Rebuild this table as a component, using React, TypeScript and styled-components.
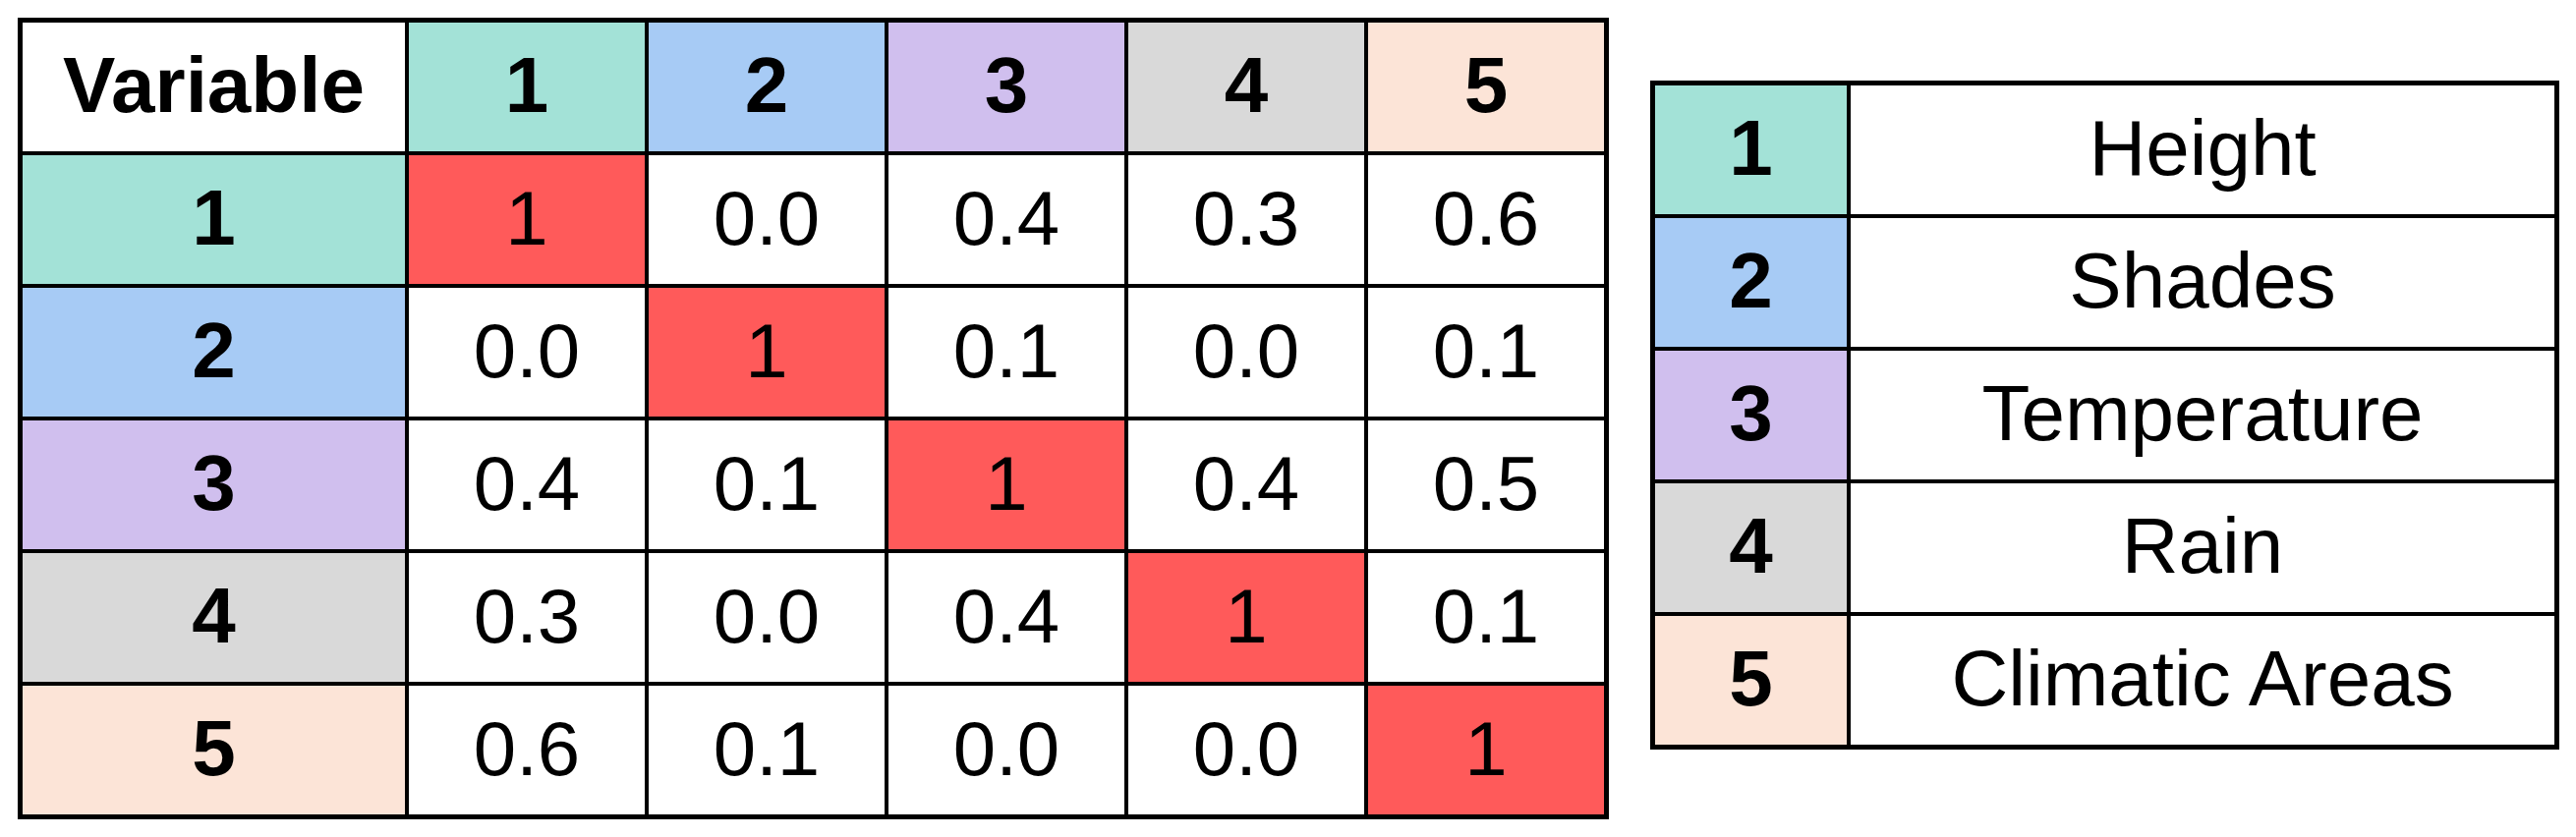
import React from "react";
import styled, { createGlobalStyle } from "styled-components";

const GlobalStyle = createGlobalStyle`
  html, body {
    margin: 0;
    padding: 0;
    background: #ffffff;
  }
  body {
    font-family: "Liberation Sans", Arial, sans-serif;
    color: #000000;
  }
`;

const palette = ["#a3e2d7", "#a7cbf5", "#d0bfee", "#d9d9d9", "#fce4d7"];
const diagonal = "#ff5a5a";

const Page = styled.div`
  display: flex;
  align-items: flex-start;
  gap: 42px;
  padding: 18px 0 0 18px;
`;

const Matrix = styled.div`
  display: grid;
  grid-template-columns: 389px repeat(5, 240px);
  grid-auto-rows: 131px;
  gap: 4px;
  padding: 5px;
  background: #000000;
`;

const Legend = styled.div`
  display: grid;
  grid-template-columns: 195px 716px;
  grid-auto-rows: 131px;
  gap: 4px;
  padding: 5px;
  margin-top: 64px;
  background: #000000;
`;

const Cell = styled.div<{ $bg?: string; $bold?: boolean; $size?: number }>`
  display: flex;
  align-items: center;
  justify-content: center;
  background: ${(p) => p.$bg ?? "#ffffff"};
  font-weight: ${(p) => (p.$bold ? 700 : 400)};
  font-size: ${(p) => p.$size ?? 78}px;
  line-height: 1;
  padding-bottom: 3px;
  box-sizing: border-box;
  white-space: nowrap;
`;

const values = [
  ["1", "0.0", "0.4", "0.3", "0.6"],
  ["0.0", "1", "0.1", "0.0", "0.1"],
  ["0.4", "0.1", "1", "0.4", "0.5"],
  ["0.3", "0.0", "0.4", "1", "0.1"],
  ["0.6", "0.1", "0.0", "0.0", "1"],
];

const labels = ["Height", "Shades", "Temperature", "Rain", "Climatic Areas"];

export default function App() {
  return (
    <>
      <GlobalStyle />
      <Page>
        <Matrix>
          <Cell $bold $size={80}>
            Variable
          </Cell>
          {palette.map((color, i) => (
            <Cell key={`h${i}`} $bg={color} $bold $size={80}>
              {i + 1}
            </Cell>
          ))}
          {values.map((row, r) => (
            <React.Fragment key={`r${r}`}>
              <Cell $bg={palette[r]} $bold $size={80}>
                {r + 1}
              </Cell>
              {row.map((v, c) => (
                <Cell key={`c${c}`} $bg={r === c ? diagonal : undefined}>
                  {v}
                </Cell>
              ))}
            </React.Fragment>
          ))}
        </Matrix>
        <Legend>
          {labels.map((label, i) => (
            <React.Fragment key={label}>
              <Cell $bg={palette[i]} $bold $size={80}>
                {i + 1}
              </Cell>
              <Cell $size={80}>{label}</Cell>
            </React.Fragment>
          ))}
        </Legend>
      </Page>
    </>
  );
}
